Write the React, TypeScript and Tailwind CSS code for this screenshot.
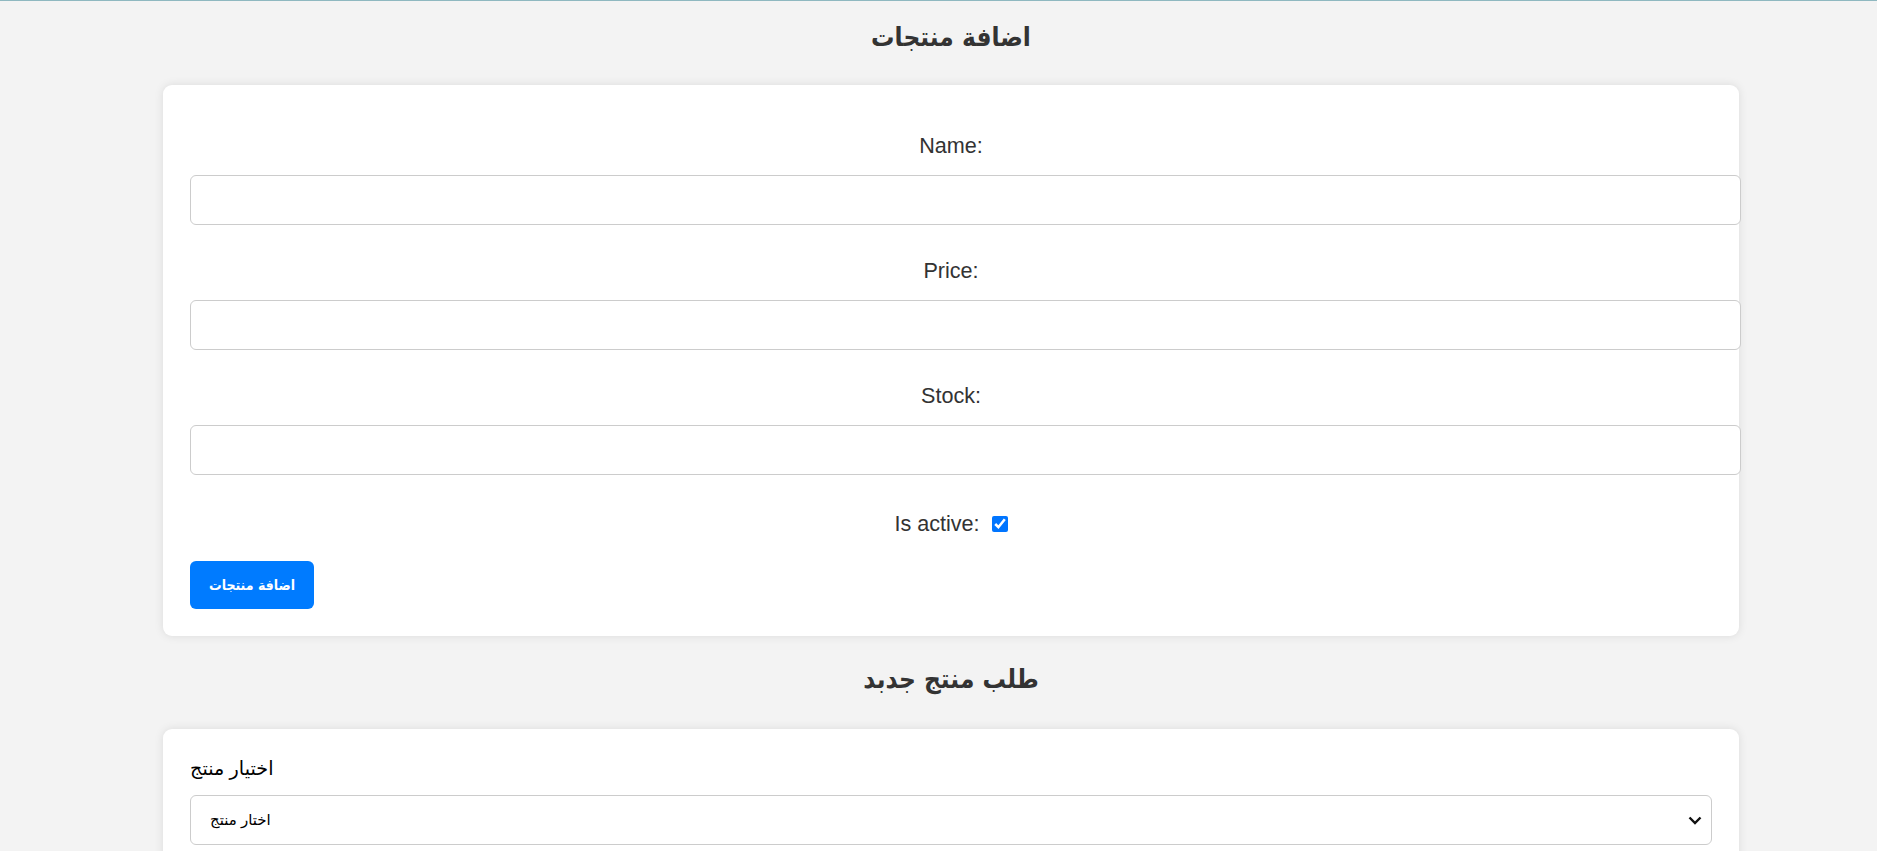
import { useState } from 'react'

const fields = ['Name', 'Price', 'Stock']

export default function App() {
  const [active, setActive] = useState(true)

  return (
    <div
      className="min-h-screen bg-[#f3f3f3] border-t border-[#8fb8c0] text-[#333]"
      style={{ fontFamily: '"Liberation Sans", Arial, "DejaVu Sans", sans-serif' }}
    >
      <div className="pl-[163px] pr-[138px]">
        {/* add product */}
        <h2 className="mt-[19px] h-[34px] leading-[34px] text-center text-[26px] font-bold font-['DejaVu_Sans_Condensed','DejaVu_Sans',sans-serif]">
          اضافة منتجات
        </h2>

        <form className="mt-[31px] bg-white rounded-[9px] shadow-[0_0_10px_rgba(0,0,0,0.1)] px-[27px] pt-[48px] pb-[27px]">
          {fields.map((f) => (
            <div key={f} className="mb-[33px]">
              <label className="block text-center text-[21.6px] leading-[25px] mb-[17px]">{f}:</label>
              <input
                type="text"
                className="block w-[calc(100%+29px)] h-[50px] border border-[#ccc] rounded-[6px] bg-white px-3 outline-none"
              />
            </div>
          ))}

          <div className="flex items-center justify-center gap-[12px] h-[25px] mt-[36px]">
            <span className="text-[21.6px] leading-[25px]">Is active:</span>
            <input
              type="checkbox"
              checked={active}
              onChange={() => setActive(!active)}
              className="w-[16px] h-[16px] accent-[#0075ff]"
            />
          </div>

          <button
            type="button"
            className="mt-[25px] w-[124px] h-[48px] rounded-[6px] bg-[#007bff] text-white text-[14px] font-bold font-['DejaVu_Sans_Condensed','DejaVu_Sans',sans-serif]"
          >
            اضافة منتجات
          </button>
        </form>

        {/* order product */}
        <h2 className="mt-[26px] h-[34px] leading-[34px] text-center text-[26px] font-bold font-['DejaVu_Sans_Condensed','DejaVu_Sans',sans-serif]">
          طلب منتج جدبد
        </h2>

        <div className="mt-[33px] bg-white rounded-[9px] shadow-[0_0_10px_rgba(0,0,0,0.1)] px-[27px] pt-[28px] pb-[27px]">
          <label className="block text-[19.2px] leading-[23px] text-black mb-[15px]">اختيار منتج</label>
          <div className="relative">
            <select className="block w-full h-[50px] appearance-none border border-[#ccc] rounded-[6px] bg-white pl-[19px] text-[15px] text-black outline-none">
              <option>اختار منتج</option>
            </select>
            <svg
              className="absolute right-[10px] top-[21px] pointer-events-none"
              width="14"
              height="9"
              viewBox="0 0 14 9"
              fill="none"
            >
              <path d="M1.5 1.5 L7 7 L12.5 1.5" stroke="#111" strokeWidth="2.4" />
            </svg>
          </div>
        </div>
      </div>
    </div>
  )
}
